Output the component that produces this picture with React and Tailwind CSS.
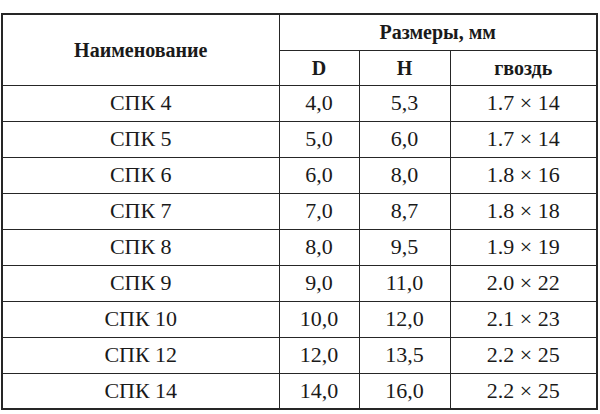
const rows = [
  ["СПК 4", "4,0", "5,3", "1.7 × 14"],
  ["СПК 5", "5,0", "6,0", "1.7 × 14"],
  ["СПК 6", "6,0", "8,0", "1.8 × 16"],
  ["СПК 7", "7,0", "8,7", "1.8 × 18"],
  ["СПК 8", "8,0", "9,5", "1.9 × 19"],
  ["СПК 9", "9,0", "11,0", "2.0 × 22"],
  ["СПК 10", "10,0", "12,0", "2.1 × 23"],
  ["СПК 12", "12,0", "13,5", "2.2 × 25"],
  ["СПК 14", "14,0", "16,0", "2.2 × 25"],
];

export default function App() {
  return (
    <div className="w-[600px] h-[414px] bg-white pt-[13px] pl-px font-['Liberation_Serif',serif] text-[#1a1a1a]">
      <table className="w-[597px] border-collapse border-2 border-[#262626] table-fixed">
        <colgroup>
          <col className="w-[277px]" />
          <col className="w-[80px]" />
          <col className="w-[91px]" />
          <col />
        </colgroup>
        <thead>
          <tr className="h-[36px]">
            <th rowSpan={2} className="border border-[#262626] text-[20px] font-bold">
              Наименование
            </th>
            <th colSpan={3} className="border border-[#262626] text-[20px] font-bold">
              Размеры, мм
            </th>
          </tr>
          <tr className="h-[35px]">
            <th className="border border-[#262626] text-[20px] font-bold">D</th>
            <th className="border border-[#262626] text-[20px] font-bold">H</th>
            <th className="border border-[#262626] text-[20px] font-bold">гвоздь</th>
          </tr>
        </thead>
        <tbody>
          {rows.map((r) => (
            <tr key={r[0]} className="h-[36px]">
              {r.map((c, i) => (
                <td key={i} className="border border-[#262626] text-center text-[22px] leading-none p-0">
                  {c}
                </td>
              ))}
            </tr>
          ))}
        </tbody>
      </table>
    </div>
  );
}
